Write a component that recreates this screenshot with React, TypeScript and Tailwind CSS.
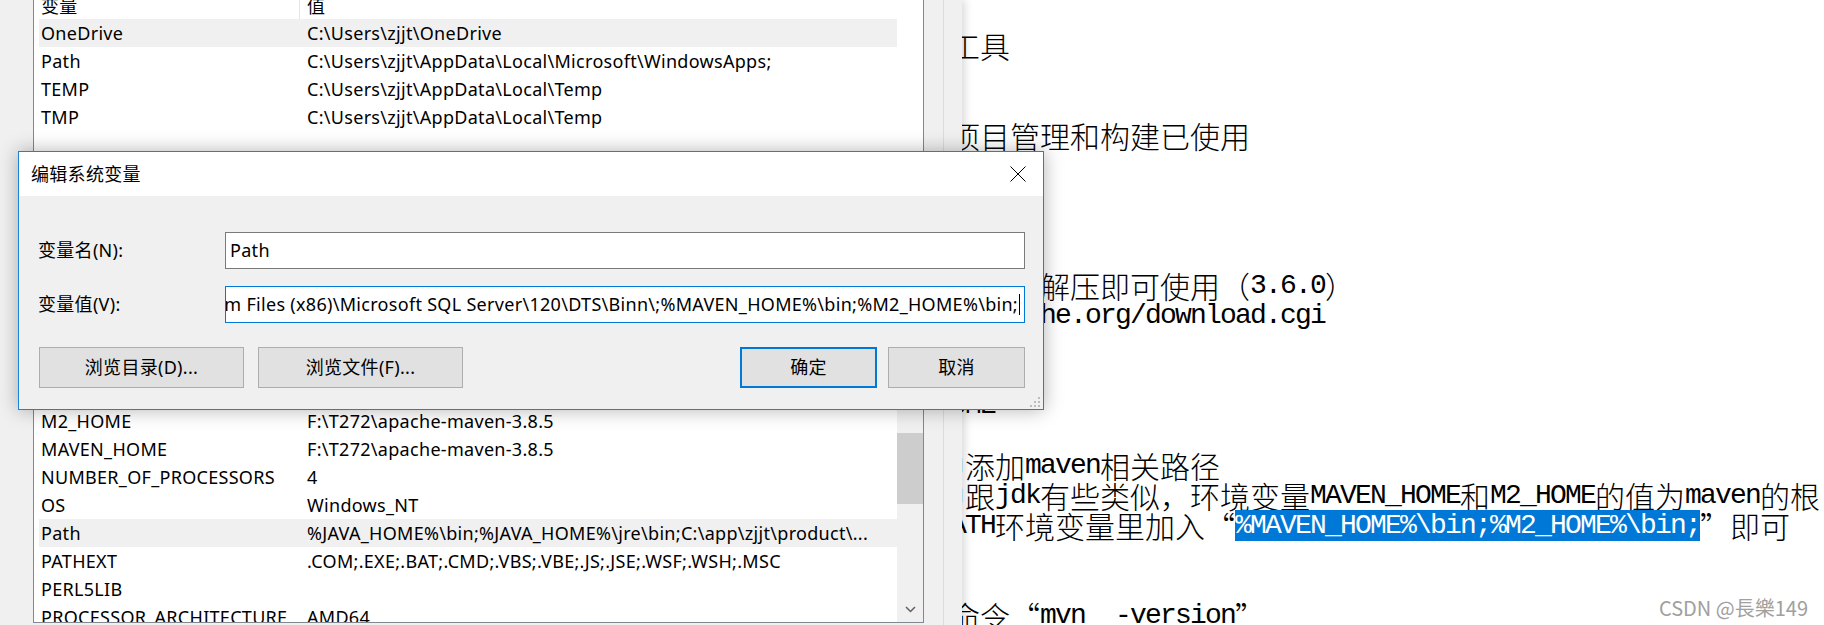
import React from "react";

const ui = "font-['Noto_Sans','Noto_Sans_CJK_SC',sans-serif] tracking-[0.3px]";
const latin = "relative -top-[5px] font-['Liberation_Mono',monospace] text-[28px] font-normal tracking-[-1.8px]";

type Item = { name: string; value: string; sel?: boolean };

const userVars: Item[] = [
  { name: "OneDrive", value: "C:\\Users\\zjjt\\OneDrive", sel: true },
  { name: "Path", value: "C:\\Users\\zjjt\\AppData\\Local\\Microsoft\\WindowsApps;" },
  { name: "TEMP", value: "C:\\Users\\zjjt\\AppData\\Local\\Temp" },
  { name: "TMP", value: "C:\\Users\\zjjt\\AppData\\Local\\Temp" },
];

const sysVars: Item[] = [
  { name: "JAVA_HOME", value: "C:\\Program Files\\Java\\jdk1.8.0_202" },
  { name: "M2_HOME", value: "F:\\T272\\apache-maven-3.8.5" },
  { name: "MAVEN_HOME", value: "F:\\T272\\apache-maven-3.8.5" },
  { name: "NUMBER_OF_PROCESSORS", value: "4" },
  { name: "OS", value: "Windows_NT" },
  { name: "Path", value: "%JAVA_HOME%\\bin;%JAVA_HOME%\\jre\\bin;C:\\app\\zjjt\\product\\...", sel: true },
  { name: "PATHEXT", value: ".COM;.EXE;.BAT;.CMD;.VBS;.VBE;.JS;.JSE;.WSF;.WSH;.MSC" },
  { name: "PERL5LIB", value: "" },
  { name: "PROCESSOR_ARCHITECTURE", value: "AMD64" },
];

// split editor text into latin / cjk runs so half-width chars get the mono font
function Mixed({ text }: { text: string }) {
  const parts = text.match(/[\x20-\x7e]+|“|”|[^\x20-\x7e“”]+/g) ?? [];
  return (
    <>
      {parts.map((p, i) => {
        if (p === "“") return <span key={i} className="inline-block w-[30px] text-right">“</span>;
        if (p === "”") return <span key={i} className="inline-block w-[30px] text-left">”</span>;
        if (/^[\x20-\x7e]/.test(p)) return <span key={i} className={latin}>{p}</span>;
        return <span key={i}>{p}</span>;
      })}
    </>
  );
}

function VarRow({ item }: { item: Item }) {
  return (
    <div className={item.sel ? "flex h-[28px] shrink-0 items-center bg-[#f0f0f0]" : "flex h-[28px] shrink-0 items-center"}>
      <div className="w-[261px] shrink-0 whitespace-nowrap pl-[2px]">{item.name}</div>
      <div className="min-w-0 flex-1 overflow-hidden whitespace-nowrap pl-[7px]">{item.value}</div>
    </div>
  );
}

function Header({ h }: { h: string }) {
  return (
    <div className={`flex shrink-0 items-stretch ${h}`}>
      <div className="flex w-[261px] shrink-0 items-center border-r border-[#e5e5e5] pl-[2px]">变量</div>
      <div className="flex items-center pl-[7px]">值</div>
    </div>
  );
}

function Grip() {
  return (
    <svg width="12" height="12" viewBox="0 0 12 12">
      {[
        [9, 1],
        [5, 5],
        [9, 5],
        [1, 9],
        [5, 9],
        [9, 9],
      ].map(([x, y]) => (
        <rect key={`${x}-${y}`} x={x} y={y} width="2" height="2" fill="#bcbcbc" />
      ))}
    </svg>
  );
}

export default function App() {
  return (
    <div className="relative flex h-[625px] w-[1824px] overflow-hidden bg-white">
      {/* environment variables window behind */}
      <div className={`relative z-10 flex h-full w-[962px] shrink-0 bg-[#f0f0f0] text-[18px] text-black shadow-[3px_0_8px_rgba(0,0,0,0.15)] ${ui}`}>
        <div className="flex w-[924px] shrink-0 flex-col pl-[33px]">
          <div className="-mt-[8px] flex h-[330px] shrink-0 border border-[#828790] bg-white">
            <div className="ml-[5px] flex min-w-0 flex-1 flex-col">
              <Header h="h-[26px]" />
              {userVars.map((v) => (
                <VarRow key={v.name} item={v} />
              ))}
            </div>
            <div className="w-[26px] shrink-0" />
          </div>

          <div className="mt-[24px] flex h-[277px] shrink-0 border border-[#828790] bg-white">
            <div className="ml-[5px] flex min-w-0 flex-1 flex-col overflow-hidden">
              <Header h="h-[32px]" />
              {sysVars.map((v) => (
                <VarRow key={v.name} item={v} />
              ))}
            </div>
            <div className="flex w-[26px] shrink-0 flex-col bg-[#f0f0f0]">
              <div className="h-[25px] shrink-0" />
              <div className="flex-1 pt-[61px]">
                <div className="h-[71px] bg-[#cdcdcd]" />
              </div>
              <div className="flex h-[25px] shrink-0 items-center justify-center">
                <svg width="11" height="7" viewBox="0 0 11 7">
                  <path d="M1 1 L5.5 5.5 L10 1" fill="none" stroke="#606060" strokeWidth="1.5" />
                </svg>
              </div>
            </div>
          </div>
        </div>
        <div className="w-[19px] shrink-0" />
        <div className="w-px shrink-0 bg-[#dcdcdc]" />
      </div>

      {/* text editor on the right */}
      <div className="min-w-0 flex-1 overflow-hidden bg-white">
        <div className="-ml-[27px] flex flex-col font-['Noto_Sans_CJK_SC',sans-serif] text-[30px] font-light text-black">
          <div className="h-[30px]" />
          <div className="h-[30px] whitespace-pre pl-[15px] leading-[30px]">
            <Mixed text="工具" />
          </div>
          <div className="h-[30px]" />
          <div className="h-[30px]" />
          <div className="h-[30px] whitespace-pre pl-[15px] leading-[30px]">
            <Mixed text="项目管理和构建已使用" />
          </div>
          <div className="h-[30px]" />
          <div className="h-[30px]" />
          <div className="h-[30px]" />
          <div className="h-[30px]" />
          <div className="h-[30px] whitespace-pre pl-[105px] leading-[30px]">
            <Mixed text="解压即可使用（3.6.0）" />
          </div>
          <div className="h-[30px] whitespace-pre pl-[105px] leading-[30px]">
            <Mixed text="he.org/download.cgi" />
          </div>
          <div className="h-[30px]" />
          <div className="h-[30px]" />
          <div className="h-[30px] whitespace-pre leading-[30px]">
            <Mixed text="HOME" />
          </div>
          <div className="h-[30px]" />
          <div className="h-[30px] whitespace-pre leading-[30px]">
            <Mixed text="中添加maven相关路径" />
          </div>
          <div className="h-[30px] whitespace-pre leading-[30px]">
            <Mixed text="中跟jdk有些类似，环境变量MAVEN_HOME和M2_HOME的值为maven的根目录" />
          </div>
          <div className="h-[30px] whitespace-pre leading-[30px]">
            <Mixed text="PATH环境变量里加入“" />
            <span className={`${latin} bg-[#0078d7] text-white`}>%MAVEN_HOME%\bin;%M2_HOME%\bin;</span>
            <Mixed text="”即可" />
          </div>
          <div className="h-[30px]" />
          <div className="h-[30px]" />
          <div className="h-[30px] whitespace-pre pl-[15px] leading-[30px]">
            <Mixed text="命令“mvn  -version”" />
          </div>
        </div>
      </div>

      {/* edit system variable dialog */}
      <div className={`absolute left-[18px] top-[151px] z-20 flex h-[259px] w-[1026px] flex-col border border-[#1883d7] bg-[#f0f0f0] text-[18px] text-black shadow-[0_0_18px_rgba(0,0,0,0.3)] ${ui}`}>
        <div className="flex h-[44px] shrink-0 items-center justify-between bg-white pl-[12px] pr-[17px]">
          <span>编辑系统变量</span>
          <svg width="16" height="16" viewBox="0 0 16 16">
            <path d="M0.5 0.5 L15.5 15.5 M15.5 0.5 L0.5 15.5" fill="none" stroke="#000" strokeWidth="1" />
          </svg>
        </div>
        <div className="relative flex flex-1 flex-col pl-[19px] pr-[18px] pt-[36px]">
          <div className="flex items-center">
            <div className="w-[187px] shrink-0">变量名(N):</div>
            <div className="flex h-[37px] min-w-0 flex-1 items-center border border-[#7a7a7a] bg-white pl-[4px]">Path</div>
          </div>
          <div className="mt-[17px] flex items-center">
            <div className="w-[187px] shrink-0">变量值(V):</div>
            <div className="flex h-[37px] min-w-0 flex-1 items-center justify-end overflow-hidden border border-[#0078d7] bg-white pr-[4px]">
              <span className="shrink-0 whitespace-nowrap">
                C:\Program Files (x86)\Microsoft SQL Server\120\DTS\Binn\;%MAVEN_HOME%\bin;%M2_HOME%\bin;
              </span>
              <span className="ml-px h-[21px] w-px shrink-0 bg-black" />
            </div>
          </div>
          <div className="mt-[24px] flex justify-between">
            <div className="flex gap-[14px] pl-px">
              <button className="h-[41px] w-[205px] border border-[#adadad] bg-[#e1e1e1]">浏览目录(D)...</button>
              <button className="h-[41px] w-[205px] border border-[#adadad] bg-[#e1e1e1]">浏览文件(F)...</button>
            </div>
            <div className="flex gap-[11px]">
              <button className="h-[41px] w-[137px] border-2 border-[#0078d7] bg-[#e1e1e1]">确定</button>
              <button className="h-[41px] w-[137px] border border-[#adadad] bg-[#e1e1e1]">取消</button>
            </div>
          </div>
          <div className="absolute bottom-[1px] right-[2px]">
            <Grip />
          </div>
        </div>
      </div>

      <div className="absolute bottom-[3px] right-[16px] z-30 font-['Noto_Sans_CJK_SC',sans-serif] text-[20px] leading-[28px] text-[#a0a0a0] [text-shadow:0_0_2px_#fff]">
        CSDN @長樂149
      </div>
    </div>
  );
}
